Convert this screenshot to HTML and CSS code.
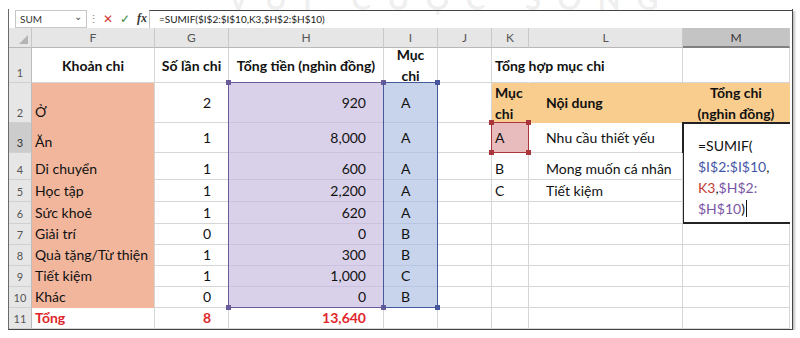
FILE: index.html
```html
<!DOCTYPE html>
<html>
<head>
    <title>SUMIF</title>
    <link rel="stylesheet" href="styles.css">
</head>
<body>
    <div class="wm">VUI CUỘC SỐNG</div>
    <div class="excel">
        <div class="fbar">
            <div class="namebox"><span>SUM</span><span class="caret">&#8964;</span></div>
            <span class="dots">&#8942;</span>
            <div class="fbtns">
                <span class="x">&#10005;</span>
                <span class="ok">&#10003;</span>
                <span class="fx">fx</span>
            </div>
            <div class="finput">=SUMIF($I$2:$I$10,K3,$H$2:$H$10)</div>
        </div>

        <div class="sheet-wrap">
            <div class="sheet">
                <div class="corner"><span class="tri"></span></div>
                <div class="ch">F</div><div class="ch">G</div><div class="ch">H</div><div class="ch">I</div>
                <div class="ch">J</div><div class="ch">K</div><div class="ch">L</div><div class="ch sel">M</div>

                <!-- hàng 1 -->
                <div class="rh">1</div>
                <div class="c mid ctr bold">Khoản chi</div>
                <div class="c mid ctr bold">Số lần chi</div>
                <div class="c mid ctr bold">Tổng tiền (nghìn đồng)</div>
                <div class="c mid ctr bold wrap">Mục chi</div>
                <div class="c"></div>
                <div class="c mid bold over">Tổng hợp mục chi</div>
                <div class="c"></div>
                <div class="c"></div>

                <!-- hàng 2 -->
                <div class="rh">2</div>
                <div class="c salmon">Ở</div>
                <div class="c mid num">2</div>
                <div class="c mid num lav">920</div>
                <div class="c mid ind blue">A</div>
                <div class="c"></div>
                <div class="c mid bold orange wrap">Mục chi</div>
                <div class="c mid bold orange ind">Nội dung</div>
                <div class="c mid bold orange ctr wrap">Tổng chi<br>(nghìn đồng)</div>

                <!-- hàng 3 -->
                <div class="rh sel">3</div>
                <div class="c salmon">Ăn</div>
                <div class="c mid num">1</div>
                <div class="c mid num lav">8,000</div>
                <div class="c mid ind blue">A</div>
                <div class="c"></div>
                <div class="c mid pink">A</div>
                <div class="c mid ind">Nhu cầu thiết yếu</div>
                <div class="edit">
                    =SUMIF(<br>
                    <span class="ref1">$I$2:$I$10</span>,<br>
                    <span class="ref2">K3</span>,<span class="ref3">$H$2:</span><br>
                    <span class="ref3">$H$10</span>)<span class="cursor"></span>
                </div>

                <!-- hàng 4 -->
                <div class="rh">4</div>
                <div class="c salmon">Di chuyển</div>
                <div class="c num">1</div>
                <div class="c num lav">600</div>
                <div class="c ind blue">A</div>
                <div class="c"></div>
                <div class="c">B</div>
                <div class="c ind">Mong muốn cá nhân</div>

                <!-- hàng 5 -->
                <div class="rh">5</div>
                <div class="c salmon">Học tập</div>
                <div class="c num">1</div>
                <div class="c num lav">2,200</div>
                <div class="c ind blue">A</div>
                <div class="c"></div>
                <div class="c">C</div>
                <div class="c ind">Tiết kiệm</div>

                <!-- hàng 6 -->
                <div class="rh">6</div>
                <div class="c salmon">Sức khoẻ</div>
                <div class="c num">1</div>
                <div class="c num lav">620</div>
                <div class="c ind blue">A</div>
                <div class="c"></div>
                <div class="c"></div>
                <div class="c"></div>

                <!-- hàng 7 -->
                <div class="rh">7</div>
                <div class="c salmon">Giải trí</div>
                <div class="c num">0</div>
                <div class="c num lav">0</div>
                <div class="c ind blue">B</div>
                <div class="c"></div><div class="c"></div><div class="c"></div><div class="c"></div>

                <!-- hàng 8 -->
                <div class="rh">8</div>
                <div class="c salmon">Quà tặng/Từ thiện</div>
                <div class="c num">1</div>
                <div class="c num lav">300</div>
                <div class="c ind blue">B</div>
                <div class="c"></div><div class="c"></div><div class="c"></div><div class="c"></div>

                <!-- hàng 9 -->
                <div class="rh">9</div>
                <div class="c salmon">Tiết kiệm</div>
                <div class="c num">1</div>
                <div class="c num lav">1,000</div>
                <div class="c ind blue">C</div>
                <div class="c"></div><div class="c"></div><div class="c"></div><div class="c"></div>

                <!-- hàng 10 -->
                <div class="rh">10</div>
                <div class="c salmon">Khác</div>
                <div class="c num">0</div>
                <div class="c num lav">0</div>
                <div class="c ind blue">B</div>
                <div class="c"></div><div class="c"></div><div class="c"></div><div class="c"></div>

                <!-- hàng 11 -->
                <div class="rh">11</div>
                <div class="c bold red">Tổng</div>
                <div class="c num bold red">8</div>
                <div class="c num bold red">13,640</div>
                <div class="c"></div>
                <div class="c"></div><div class="c"></div><div class="c"></div><div class="c"></div>
            </div>

            <!-- khung vùng tham chiếu của công thức -->
            <div class="marks">
                <div class="rng rng-h"><i class="hd tl"></i><i class="hd tr"></i><i class="hd bl"></i><i class="hd br"></i></div>
                <div class="rng rng-i"><i class="hd tr"></i><i class="hd br"></i></div>
                <div class="rng rng-k"><i class="hd tl"></i><i class="hd tr"></i><i class="hd bl"></i><i class="hd br"></i></div>
            </div>
        </div>
    </div>
</body>
</html>
```

FILE: styles.css
```css
body {
    margin: 0;
    background-color: #fff;
    font-family: Lato, "Open Sans", sans-serif;
    color: #111;
}
.wm {
    position: absolute;
    left: 228px;
    top: -20px;
    font-size: 30px;
    font-weight: bold;
    letter-spacing: 16px;
    color: rgba(0, 0, 0, 0.08);
    white-space: nowrap;
    z-index: 5;
}
.excel {
    width: 783px;
    margin: 9px 0 0 8px;
    border-left: 1px solid #6a6a6a;
    border-right: 1px solid #444;
    border-bottom: 1px solid #444;
    box-shadow: 2px 2px 2px #c4c4c4;
}
.fbar {
    display: flex;
    align-items: center;
    height: 19px;
    background-color: #fff;
    font-size: 10px;
}
.namebox {
    display: flex;
    justify-content: space-between;
    align-items: center;
    width: 62px;
    height: 16px;
    margin-left: 6px;
    padding: 0 4px;
    border: 1px solid #c6c6c6;
    color: #333;
}
.caret {
    font-size: 10px;
    color: #555;
    margin-top: -5px;
}
.dots {
    width: 12px;
    text-align: center;
    color: #888;
    font-size: 11px;
}
.fbtns {
    display: flex;
    align-items: center;
    gap: 7px;
    width: 46px;
    padding-left: 4px;
    font-size: 12px;
}
.fbtns .x {
    color: #d03a34;
}
.fbtns .ok {
    color: #3c8a3c;
}
.fbtns .fx {
    font-family: "Liberation Serif", serif;
    font-style: italic;
    font-weight: bold;
    color: #333;
}
.finput {
    flex: 1;
    height: 17px;
    line-height: 17px;
    padding-left: 9px;
    border-top: 1px solid #444;
    border-left: 1px solid #c6c6c6;
    color: #222;
}
.sheet-wrap {
    position: relative;
}
.sheet, .marks {
    display: grid;
    grid-template-columns: 23px 123px 74px 155px 54px 54px 37px 154px 107px;
    grid-template-rows: 20px 35px 40px 30px 27px 22px 22px 21px 21px 21px 21px 21px;
}
.marks {
    position: absolute;
    inset: 0;
    pointer-events: none;
}
.corner, .ch, .rh {
    background-color: #e6e6e6;
    color: #555;
    box-sizing: border-box;
}
.corner {
    position: relative;
    border-right: 1px solid #c6c6c6;
    border-bottom: 1px solid #b8b8b8;
}
.tri {
    position: absolute;
    right: 3px;
    bottom: 3px;
    width: 0;
    height: 0;
    border-left: 9px solid transparent;
    border-bottom: 9px solid #b4b4b4;
}
.ch {
    display: flex;
    align-items: center;
    justify-content: center;
    font-size: 12px;
    border-right: 1px solid #c9c9c9;
    border-bottom: 1px solid #b8b8b8;
}
.ch.sel {
    background-color: #c4c4c4;
    color: #333;
    border-bottom: 2px solid #808080;
}
.rh {
    display: flex;
    align-items: flex-end;
    justify-content: center;
    padding-bottom: 3px;
    font-size: 11px;
    border-right: 1px solid #bcbcbc;
    border-bottom: 1px solid #d0d0d0;
}
.rh.sel {
    background-color: #cccccc;
    color: #333;
}
.c {
    display: flex;
    align-items: flex-end;
    padding: 0 3px 1px 3px;
    font-size: 14px;
    line-height: 19px;
    white-space: nowrap;
    box-sizing: border-box;
    border-right: 1px solid #d6d6d6;
    border-bottom: 1px solid #d6d6d6;
}
.mid {
    align-items: center;
    padding-bottom: 0;
}
.ctr {
    justify-content: center;
    text-align: center;
}
.num {
    justify-content: flex-end;
    padding-right: 17px;
}
.ind {
    padding-left: 17px;
}
.bold {
    font-weight: bold;
}
.wrap {
    white-space: normal;
    line-height: 21px;
}
.over {
    overflow: visible;
    border-right-color: transparent;
}
.red {
    color: #e0262b;
}
.salmon {
    background-color: #f2b69d;
    border-bottom-color: #f2b69d;
}
.lav {
    background-color: #d9d1e9;
    border-bottom-color: #cbc2de;
}
.blue {
    background-color: #c7d4ec;
    border-bottom-color: #b8c6e2;
}
.orange {
    background-color: #f9cd8e;
    border-color: #f9cd8e;
}
.pink {
    background-color: #e8bcbc;
}
.edit {
    grid-row: span 4;
    margin: -1px 0 0 -1px;
    padding: 11px 0 0 14px;
    background-color: #fff;
    border-top: 2px solid #222;
    border-left: 2px solid #222;
    border-bottom: 2px solid #222;
    font-size: 14px;
    line-height: 21px;
    white-space: nowrap;
}
.ref1 {
    color: #4656a6;
}
.ref2 {
    color: #c23a32;
}
.ref3 {
    color: #7a55a6;
}
.cursor {
    display: inline-block;
    width: 1px;
    height: 17px;
    margin-left: 1px;
    vertical-align: -3px;
    background-color: #111;
}
.rng {
    position: relative;
    margin: -1px 0 0 -1px;
    border: 1px solid;
}
.rng-h {
    grid-column: 4;
    grid-row: 3 / 12;
    border-color: #6b5b99;
}
.rng-i {
    grid-column: 5;
    grid-row: 3 / 12;
    border-color: #46579c;
}
.rng-k {
    grid-column: 7;
    grid-row: 4;
    border-color: #a8363a;
}
.hd {
    position: absolute;
    width: 5px;
    height: 5px;
}
.rng-h .hd {
    background-color: #6b5b99;
}
.rng-i .hd {
    background-color: #46579c;
}
.rng-k .hd {
    background-color: #a8363a;
}
.hd.tl { left: -3px; top: -3px; }
.hd.tr { right: -3px; top: -3px; }
.hd.bl { left: -3px; bottom: -3px; }
.hd.br { right: -3px; bottom: -3px; }
```
